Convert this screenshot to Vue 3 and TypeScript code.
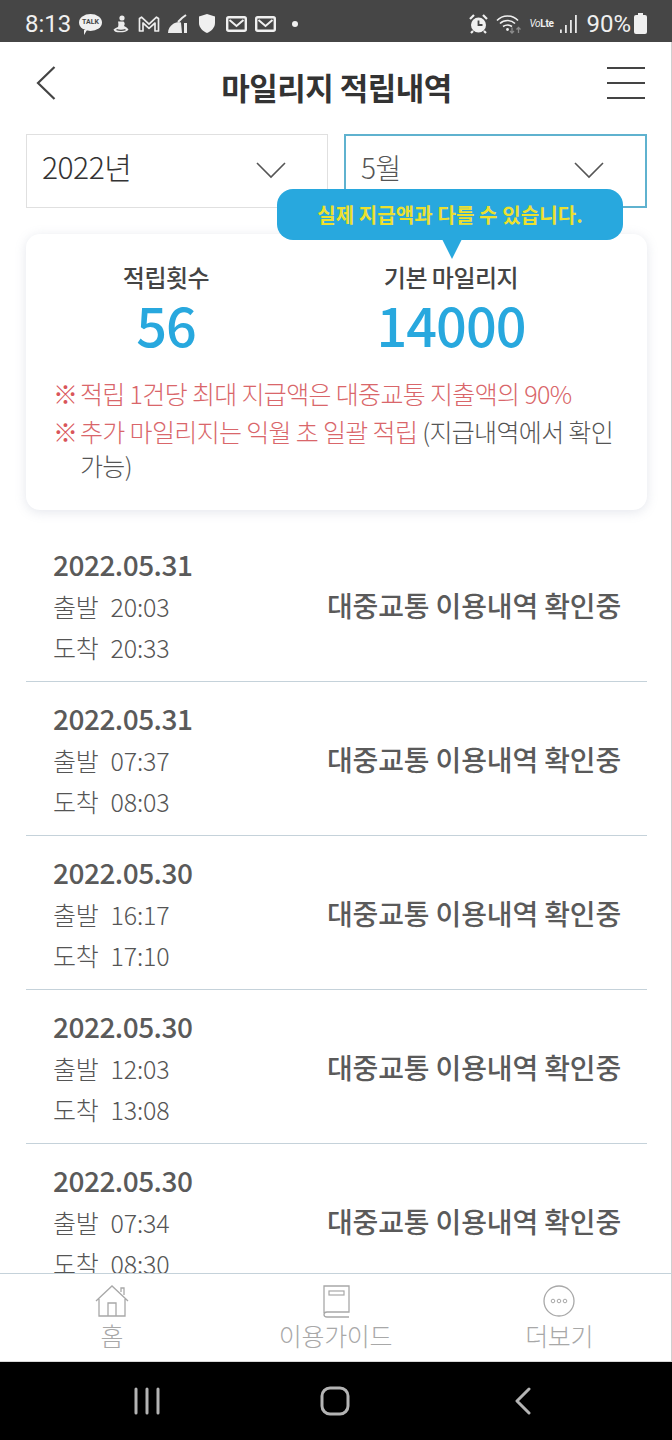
<template>
  <div class="phone">
    <div class="status-bar">
      <div class="status-left">
        <span class="clock">8:13</span>
        <span class="talk"><span class="talk-text">TALK</span><i class="talk-tail"></i></span>
        <svg class="ic fig" width="16" height="18" viewBox="0 0 16 18">
          <circle cx="9" cy="3" r="2.600" fill="#ececec" />
          <path d="M5 6.500h5.500c1.500 1 1.500 3 .5 4.500 2 .8 3.500 2 4.500 3.500-1.500 1.800-3.500 2.800-6 2.800H4.500C2.500 17.300 1 16 .5 14.500 2 13.500 3.500 12.500 5 12c.5-1.500.5-3.500 0-5.500z" fill="#ececec" />
          <path d="M3.500 14.700c3 1 6 1 9 0" stroke="#464646" stroke-width="1.300" fill="none" />
        </svg>
        <svg class="ic m" width="22" height="16" viewBox="0 0 22 16">
          <path d="M1.500 15V2.500l2-1.300 7.500 7 7.500-7 2 1.300V15h-3.500V7l-6 5.300L5 7v8z" fill="none" stroke="#ececec" stroke-width="1.700" stroke-linejoin="round" />
        </svg>
        <svg class="ic broom" width="20" height="20" viewBox="0 0 20 20">
          <path d="M0 19c0-4 2-7 5-9 2-1.500 5-2 8-1.500l1 10.500z" fill="#ececec" />
          <path d="M10 8l4-4 4-3" stroke="#ececec" stroke-width="2" fill="none" />
          <path d="M16 9h3v10h-3z" fill="#ececec" />
        </svg>
        <svg class="ic shield" width="16" height="19" viewBox="0 0 16 19">
          <path d="M8 0l8 2.500V9c0 4.500-3.500 8-8 10C3.500 17 0 13.500 0 9V2.500z" fill="#f0f0f0" />
        </svg>
        <svg v-for="n in 2" :key="n" class="ic mail" width="21" height="16" viewBox="0 0 21 16">
          <rect x="1.200" y="1.200" width="18.600" height="13.600" rx="1.500" fill="none" stroke="#f0f0f0" stroke-width="2.400" />
          <path d="M3.500 4l7 6 7-6" fill="none" stroke="#f0f0f0" stroke-width="2" />
        </svg>
        <span class="dot"></span>
      </div>
      <div class="status-right">
        <svg class="ic alarm" width="19" height="20" viewBox="0 0 19 20">
          <circle cx="9.500" cy="11" r="7.500" fill="#f0f0f0" />
          <path d="M9.500 6.500V11h4" fill="none" stroke="#464646" stroke-width="1.800" />
          <path d="M1 5l4-4M18 5l-4-4M4 17l-2 2M15 17l2 2" stroke="#f0f0f0" stroke-width="2.200" />
        </svg>
        <svg class="ic wifi" width="25" height="20" viewBox="0 0 25 20">
          <path d="M1 6.500c5.500-6 15.500-6 21 0M4 9.500c4-4 11-4 15 0M7 12.500c3-2 6-2 9 0" fill="none" stroke="#f0f0f0" stroke-width="1.600" />
          <circle cx="11.500" cy="15.500" r="1.400" fill="#f0f0f0" />
          <path d="M16 13.500v5.500M14 17l2 2 2-2" fill="none" stroke="#8c8c8c" stroke-width="1.300" />
          <path d="M22.500 19v-5.500M20.500 15.500l2-2 2 2" fill="none" stroke="#8c8c8c" stroke-width="1.300" />
        </svg>
        <span class="volte"><em>Vo</em><b>Lte</b></span>
        <svg class="ic signal" width="17" height="18" viewBox="0 0 17 18">
          <path d="M0 14.500h1.800V18H0zM5 10h1.800v8H5zM10 5h1.800v13H10zM15 0h1.800v18H15z" fill="#e8e8e8" />
        </svg>
        <span class="battery-text">90%</span>
        <span class="battery"><i></i></span>
      </div>
    </div>

    <div class="content">
      <header class="top-bar">
        <svg class="back" width="22" height="36" viewBox="0 0 22 36">
          <path d="M19.500 2L3 18l16.500 16" fill="none" stroke="#444" stroke-width="2.200" />
        </svg>
        <h1>마일리지 적립내역</h1>
        <div class="menu"><i></i><i></i><i></i></div>
      </header>

      <div class="selects">
        <div class="select">
          <span>2022년</span>
          <svg width="32" height="18" viewBox="0 0 32 18"><path d="M2 2l14 14L30 2" fill="none" stroke="#555" stroke-width="1.600" /></svg>
        </div>
        <div class="select active">
          <span>5월</span>
          <svg width="32" height="18" viewBox="0 0 32 18"><path d="M2 2l14 14L30 2" fill="none" stroke="#555" stroke-width="1.600" /></svg>
        </div>
        <div class="tip">실제 지급액과 다를 수 있습니다.</div>
      </div>

      <section class="summary">
        <div class="stats">
          <div class="stat count">
            <div class="stat-label">적립횟수</div>
            <div class="stat-value">56</div>
          </div>
          <div class="stat base">
            <div class="stat-label">기본 마일리지</div>
            <div class="stat-value">14000</div>
          </div>
        </div>
        <p class="note"><span class="mark">※</span><span><span class="red">적립 1건당 최대 지급액은 대중교통 지출액의 90%</span></span></p>
        <p class="note"><span class="mark">※</span><span><span class="red">추가 마일리지는 익월 초 일괄 적립</span> (지급내역에서 확인 가능)</span></p>
      </section>

      <ul class="history">
        <li v-for="(row, i) in rows" :key="i" class="row">
          <div>
            <div class="date">{{ row.date }}</div>
            <div class="time"><span>출발</span><span>{{ row.start }}</span></div>
            <div class="time"><span>도착</span><span>{{ row.end }}</span></div>
          </div>
          <div class="state">대중교통 이용내역 확인중</div>
        </li>
      </ul>
    </div>

    <nav class="tabs">
      <div class="tab">
        <svg width="36" height="34" viewBox="0 0 36 34">
          <path d="M2 17L18 2l16 15M5 15v17h26V15M14 32V19h8v13M27 8V4h3v7" fill="none" stroke="#a8a8a8" stroke-width="1.300" />
        </svg>
        <span>홈</span>
      </div>
      <div class="tab">
        <svg class="book" width="36" height="34" viewBox="0 0 36 34">
          <path d="M8 29V2h25v26H11c-4 0-4 5 0 5h22" fill="none" stroke="#a8a8a8" stroke-width="1.300" />
          <rect x="13" y="7" width="15" height="4" fill="none" stroke="#a8a8a8" stroke-width="1.200" />
        </svg>
        <span>이용가이드</span>
      </div>
      <div class="tab">
        <svg width="36" height="34" viewBox="0 0 36 34">
          <circle cx="18" cy="17" r="15" fill="none" stroke="#a8a8a8" stroke-width="1.300" />
          <circle cx="12" cy="17" r="1.800" fill="none" stroke="#a8a8a8" />
          <circle cx="18" cy="17" r="1.800" fill="none" stroke="#a8a8a8" />
          <circle cx="24" cy="17" r="1.800" fill="none" stroke="#a8a8a8" />
        </svg>
        <span>더보기</span>
      </div>
    </nav>

    <div class="system-nav">
      <svg width="28" height="28" viewBox="0 0 28 28"><path d="M3 2v24M14 2v24M25 2v24" stroke="#b4b4b4" stroke-width="3" stroke-linecap="round" /></svg>
      <svg width="30" height="30" viewBox="0 0 30 30"><rect x="2" y="2" width="26" height="26" rx="8" fill="none" stroke="#b4b4b4" stroke-width="3" /></svg>
      <svg width="18" height="28" viewBox="0 0 18 28"><path d="M15 2L3 14l12 12" fill="none" stroke="#b4b4b4" stroke-width="3" stroke-linecap="round" stroke-linejoin="round" /></svg>
    </div>
  </div>
</template>

<script setup lang="ts">
interface Row {
  date: string
  start: string
  end: string
}

const rows: Row[] = [
  { date: '2022.05.31', start: '20:03', end: '20:33' },
  { date: '2022.05.31', start: '07:37', end: '08:03' },
  { date: '2022.05.30', start: '16:17', end: '17:10' },
  { date: '2022.05.30', start: '12:03', end: '13:08' },
  { date: '2022.05.30', start: '07:34', end: '08:30' },
]
</script>

<style>
html, body {
  margin: 0;
  background: #fff;
}
</style>

<style scoped>
.phone {
  width: 672px;
  height: 1440px;
  display: flex;
  flex-direction: column;
  overflow: hidden;
  background: #fff;
  font-family: "Noto Sans CJK KR", "Noto Sans", sans-serif;
  color: #444;
}

.status-bar {
  height: 42px;
  flex: none;
  box-sizing: border-box;
  background: #464646;
  display: flex;
  justify-content: space-between;
  align-items: center;
  padding: 5px 25px 0 25px;
  color: #f0f0f0;
  font-family: Roboto, sans-serif;
}
.status-left, .status-right {
  display: flex;
  align-items: center;
}
.clock {
  font-size: 24px;
  width: 54px;
}
.talk {
  position: relative;
  width: 23px;
  height: 17px;
  margin-right: 11px;
  margin-top: -3px;
  border-radius: 50%;
  background: #f0f0f0;
  display: flex;
  align-items: center;
  justify-content: center;
}
.talk-text {
  font-size: 7px;
  font-weight: 700;
  color: #464646;
}
.talk-tail {
  position: absolute;
  left: 5px;
  bottom: -4px;
  border-left: 3px solid #f0f0f0;
  border-bottom: 5px solid transparent;
}
.ic { display: block; }
.fig { margin-right: 9px; }
.m { margin-right: 8px; }
.broom { margin-right: 11px; }
.shield { margin-right: 11px; }
.mail { margin-right: 8px; }
.dot {
  width: 6px;
  height: 6px;
  border-radius: 50%;
  background: #f0f0f0;
  margin-left: 8px;
}
.alarm { margin-right: 8px; }
.wifi { margin-right: 8px; }
.signal { margin-right: 9px; }
.volte {
  width: 26px;
  margin-right: 5px;
  white-space: nowrap;
  font-size: 10px;
  letter-spacing: -0.3px;
}
.volte em { font-size: 10px; }
.battery-text {
  font-size: 24px;
  margin-right: 3px;
}
.battery {
  width: 13px;
  height: 19px;
  background: #f0f0f0;
  border-radius: 2px;
  position: relative;
  margin-top: 2px;
}
.battery i {
  position: absolute;
  left: 4px;
  top: -2px;
  width: 5px;
  height: 2px;
  background: #f0f0f0;
}

.content {
  flex: 1;
  min-height: 0;
  overflow: hidden;
  padding: 0 24px 0 26px;
  border-right: 1px solid #cfcfcf;
}

.top-bar {
  height: 82px;
  margin: 0 2px 10px 9px;
  display: flex;
  align-items: center;
  justify-content: space-between;
}
.back { display: block; }
.top-bar h1 {
  margin: 6px 0 0 9px;
  font-size: 31px;
  font-weight: 700;
  color: #333;
  letter-spacing: -0.5px;
}
.menu {
  width: 38px;
  display: flex;
  flex-direction: column;
  gap: 13px;
}
.menu i {
  height: 2px;
  background: #444;
}

.selects {
  position: relative;
  display: grid;
  grid-template-columns: 302px 303px;
  gap: 16px;
}
.select {
  height: 74px;
  box-sizing: border-box;
  border: 1px solid #e0e0e0;
  display: flex;
  align-items: center;
  justify-content: space-between;
  padding: 0 40px 0 15px;
  font-size: 30px;
  color: #333;
  font-weight: 300;
  letter-spacing: -0.5px;
}
.select span { margin-top: -10px; }
.select svg { margin-top: -2px; }
.select.active {
  border: 2px solid #5fb2cf;
  color: #555;
  font-size: 28px;
}
.select.active span { margin-top: -8px; }
.tip {
  position: absolute;
  left: 251px;
  top: 55px;
  width: 346px;
  height: 51px;
  border-radius: 16px;
  background: #28a8de;
  color: #ece02f;
  font-size: 20px;
  font-weight: 700;
  letter-spacing: 0.1px;
  line-height: 51px;
  text-align: center;
  z-index: 2;
}
.tip::after {
  content: "";
  position: absolute;
  left: 165px;
  top: 50px;
  border-left: 10px solid transparent;
  border-right: 10px solid transparent;
  border-top: 20px solid #28a8de;
}

.summary {
  margin-top: 26px;
  height: 276px;
  box-sizing: border-box;
  border-radius: 14px;
  background: #fff;
  box-shadow: 0 2px 12px rgba(120, 130, 160, 0.2);
  padding: 27px 24px 0 27px;
}
.stats {
  display: flex;
  margin-bottom: 21px;
}
.stat { text-align: center; }
.count { width: 226px; }
.base { width: 344px; }
.stat-label {
  font-size: 24px;
  line-height: 32px;
  font-weight: 500;
  letter-spacing: -0.5px;
  color: #444;
}
.stat-value {
  font-size: 54px;
  line-height: 62px;
  font-weight: 500;
  color: #28a8de;
  letter-spacing: -1px;
}
.note {
  margin: 0 0 4px;
  display: flex;
  font-size: 25px;
  line-height: 34px;
  font-weight: 300;
  letter-spacing: -0.65px;
  color: #555;
  word-break: keep-all;
}
.mark {
  width: 27px;
  flex: none;
  color: #d9555a;
}
.red { color: #d9666a; }

.history {
  list-style: none;
  margin: 18px 0 0;
  padding: 0;
}
.row {
  height: 154px;
  box-sizing: border-box;
  border-bottom: 1px solid #c5d2da;
  padding: 14px 26px 0 27px;
  display: flex;
  justify-content: space-between;
}
.row:last-child { border-bottom: 0; }
.date {
  font-size: 28px;
  line-height: 44px;
  color: #5a5a5a;
  font-weight: 500;
  letter-spacing: -0.5px;
}
.time {
  display: flex;
  gap: 12px;
  font-size: 25px;
  line-height: 41px;
  font-weight: 300;
  letter-spacing: -0.2px;
  color: #555;
}
.state {
  margin-top: 43px;
  font-size: 28px;
  line-height: 40px;
  font-weight: 500;
  letter-spacing: -0.15px;
  color: #5a5a5a;
}

.tabs {
  flex: none;
  height: 89px;
  box-sizing: border-box;
  border-top: 1px solid #c5d2da;
  border-right: 1px solid #cfcfcf;
  border-bottom: 1px solid #d8d8d8;
  display: flex;
  background: #fff;
  padding-top: 10px;
}
.tab {
  flex: 1;
  display: flex;
  flex-direction: column;
  align-items: center;
  font-size: 25px;
  line-height: 34px;
  font-weight: 300;
  letter-spacing: -0.3px;
  color: #a8a8a8;
}
.tab svg { display: block; }
.book { margin-left: -4px; }

.system-nav {
  flex: none;
  height: 78px;
  padding-right: 2px;
  background: #000;
  display: grid;
  grid-template-columns: repeat(3, 188px);
  justify-content: center;
  justify-items: center;
  align-items: center;
}
</style>
